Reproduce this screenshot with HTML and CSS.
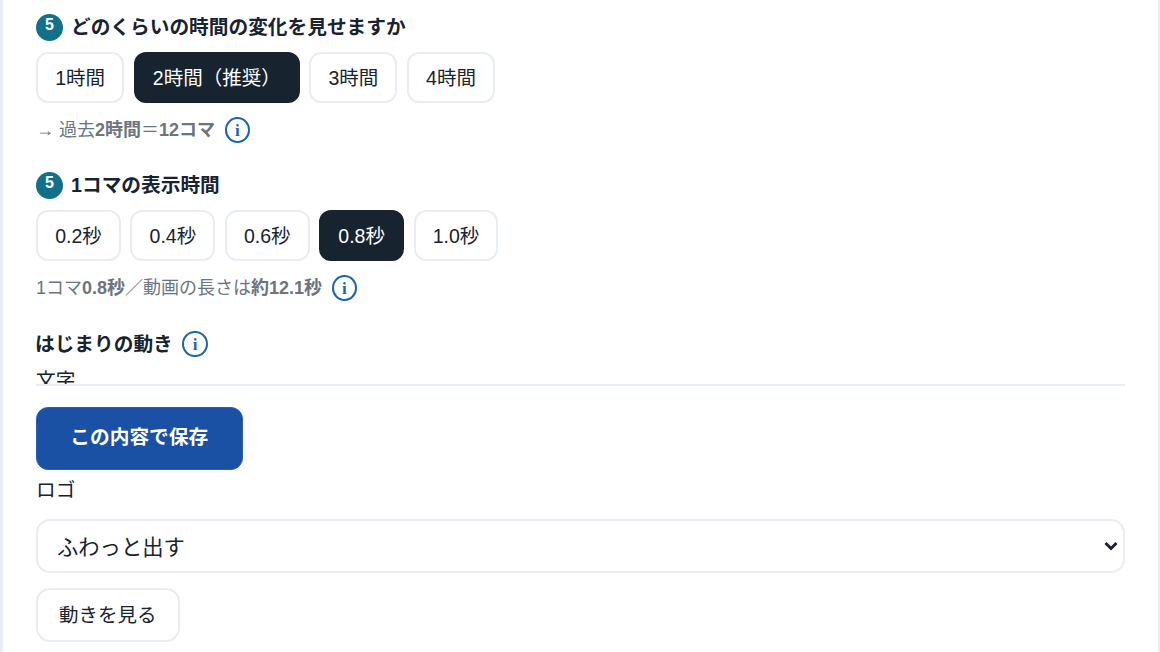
FILE: index.html
```html
<!DOCTYPE html>
<html lang="ja">
<head>
<meta charset="utf-8">
<title>設定</title>
<link rel="stylesheet" href="styles.css">
</head>
<body>
<main class="panel">
  <div class="scroller">
    <section class="group">
      <h3 class="heading"><span class="step">5</span>どのくらいの時間の変化を見せますか</h3>
      <div class="chips">
        <button class="chip">1時間</button>
        <button class="chip active">2時間（推奨）</button>
        <button class="chip">3時間</button>
        <button class="chip">4時間</button>
      </div>
      <p class="note">→ 過去<b>2時間</b>＝<b>12コマ</b><span class="info">i</span></p>
    </section>
    <section class="group">
      <h3 class="heading"><span class="step">5</span>1コマの表示時間</h3>
      <div class="chips">
        <button class="chip">0.2秒</button>
        <button class="chip">0.4秒</button>
        <button class="chip">0.6秒</button>
        <button class="chip active">0.8秒</button>
        <button class="chip">1.0秒</button>
      </div>
      <p class="note">1コマ<b>0.8秒</b>／動画の長さは<b>約12.1秒</b><span class="info">i</span></p>
    </section>
    <section class="group">
      <h3 class="heading heading-plain">はじまりの動き<span class="info">i</span></h3>
      <div class="field-label clipped">文字</div>
    </section>
  </div>
  <div class="footer">
    <button class="save">この内容で保存</button>
    <div class="field-label">ロゴ</div>
    <div class="select-wrap">
      <select class="select"><option>ふわっと出す</option></select>
      <svg class="chevron" viewBox="0 0 14 10" width="14" height="10" aria-hidden="true"><path d="M1.5 2 7 7.5 12.5 2" fill="none" stroke="#17232f" stroke-width="3"/></svg>
    </div>
    <button class="preview">動きを見る</button>
  </div>
</main>
</body>
</html>
```
FILE: styles.css
```css
* { box-sizing: border-box; }
html, body { margin: 0; height: 652px; overflow: hidden; background: #fff; }
body {
  font-family: "Liberation Sans", "Noto Sans CJK JP", sans-serif;
  color: #17232f;
  font-size: 19.7px;
}
.panel {
  height: 652px;
  border-left: 3px solid #e6edf5;
  border-right: 2px solid #e6edf5;
  padding: 0 33px;
  overflow: hidden;
}
.scroller { height: 384px; overflow: hidden; padding-top: 14px; }
.group { margin-bottom: 29px; }
.heading {
  display: flex;
  align-items: center;
  margin: 0 0 11px;
  height: 27px;
  padding-bottom: 1px;
  font-size: 19.7px;
  font-weight: 700;
  line-height: 26px;
}
.heading-plain { padding: 1px 0 0; margin-left: -1px; }
.step {
  flex: none;
  display: flex;
  align-items: center;
  justify-content: center;
  width: 27px;
  height: 27px;
  margin-right: 8px;
  padding-bottom: 4px;
  border-radius: 50%;
  background: #13708a;
  color: #fff;
  font-size: 16px;
  line-height: 1;
}
.chips { display: flex; gap: 9.4px; }
.chip {
  height: 51px;
  padding: 0 17.2px 3px;
  border: 2px solid #e8edf3;
  border-radius: 12px;
  background: #fff;
  color: #17232f;
  font: inherit;
  font-size: 19.5px;
}
.chip.active { background: #17232f; border-color: #17232f; color: #fff; }
.note {
  display: flex;
  align-items: center;
  margin: 14px 0 0;
  height: 26px;
  color: #6a7580;
  font-size: 18px;
  line-height: 22px;
}
.info {
  flex: none;
  display: flex;
  align-items: center;
  justify-content: center;
  width: 25.4px;
  height: 26px;
  margin-left: 9.5px;
  border: 2px solid #1a66b0;
  border-radius: 50%;
  background: #fff;
  color: #1a66b0;
  font-family: "Liberation Serif", serif;
  font-size: 17px;
  font-weight: 700;
  line-height: 1;
}
.field-label { font-size: 19.7px; line-height: 27px; }
.clipped { margin-top: -1px; }
.footer { border-top: 2px solid #e8edf3; padding-top: 21px; }
.save {
  display: block;
  width: 206.5px;
  height: 62.5px;
  padding: 0 0 5px;
  border: 1px solid #2a5fb0;
  border-radius: 12px;
  background: #1a51a5;
  color: #fff;
  font: inherit;
  font-weight: 700;
}
.footer .field-label { margin-top: 7.5px; }
.select-wrap { position: relative; margin-top: 15px; }
.select {
  display: block;
  width: 100%;
  height: 54px;
  padding: 3px 19px 0;
  appearance: none;
  border: 2px solid #e8edf3;
  border-radius: 14px;
  background: #fff;
  color: #17232f;
  font: inherit;
  font-size: 21.3px;
}
.chevron { position: absolute; right: 7px; top: 22px; pointer-events: none; }
.preview {
  display: block;
  width: 143.5px;
  height: 54px;
  margin-top: 15px;
  padding: 0 0 4px;
  border: 2px solid #e8edf3;
  border-radius: 14px;
  background: #fff;
  color: #17232f;
  font: inherit;
  font-size: 19.5px;
}
```
